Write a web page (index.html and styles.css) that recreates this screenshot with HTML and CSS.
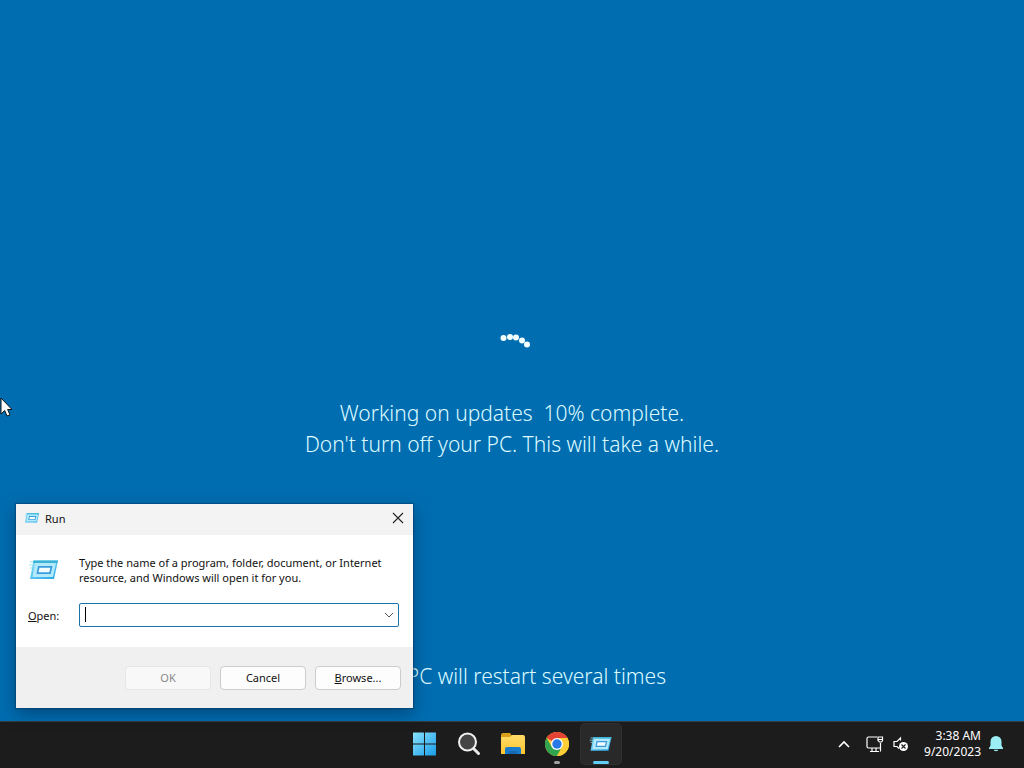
FILE: index.html
```html
<!DOCTYPE html>
<html lang="en">
<head>
  <meta charset="UTF-8" />
  <meta name="viewport" content="width=device-width, initial-scale=1" />
  <title>Working on updates</title>
  <link rel="stylesheet" href="styles.css">
</head>
<body>
  <!-- shared icons -->
  <svg class="defs" aria-hidden="true">
    <defs>
      <linearGradient id="blue" x1="0" y1="0" x2="1" y2="1">
        <stop offset="0" stop-color="#8be3f8" />
        <stop offset="1" stop-color="#24a3e8" />
      </linearGradient>
      <linearGradient id="start" gradientUnits="userSpaceOnUse" x1="0" y1="0" x2="24" y2="24">
        <stop offset="0" stop-color="#8be3fc" />
        <stop offset="1" stop-color="#159ae8" />
      </linearGradient>
      <linearGradient id="folder" x1="0" y1="0" x2="0" y2="1">
        <stop offset="0" stop-color="#ffdc68" />
        <stop offset="1" stop-color="#ffc52e" />
      </linearGradient>
      <symbol id="run-icon" viewBox="0 0 32 24">
        <path d="M2 4h6M1 7h5M2 10h4" stroke="#9be2f3" stroke-width="1" />
        <path d="M5.500 2.500h24.500l-4 18.500H2z" fill="url(#blue)" />
        <path d="M5.500 2.500h24.500l-.6 2.500H5z" fill="#3cb3d5" />
        <path d="M7 5h21l-3 14H4.500z" fill="#b2eafc" />
        <path d="M10 8h14.500l-1.800 8H8.500z" fill="#3a9cdc" />
        <path d="M11.500 9.800h10.800l-1 4.500H10.500z" fill="#f2fcff" />
      </symbol>
    </defs>
  </svg>

  <main class="screen">
    <section class="progress">
      <svg class="spinner" viewBox="0 0 48 48" fill="#f2ffff">
        <circle cx="15.500" cy="4" r="3" />
        <circle cx="22" cy="3" r="3" />
        <circle cx="28" cy="3.500" r="3" />
        <circle cx="34" cy="6.500" r="3" />
        <circle cx="39" cy="10.500" r="3" />
      </svg>
      <p>Working on updates&nbsp; 10% complete.</p>
      <p>Don't turn off your PC. This will take a while.</p>
    </section>
    <p class="restart">Your PC will restart several times</p>
  </main>

  <form class="run" role="dialog" aria-labelledby="run-title">
    <header class="run-title">
      <svg class="small-icon"><use href="#run-icon" /></svg>
      <h1 id="run-title">Run</h1>
      <button type="button" class="close" aria-label="Close">
        <svg viewBox="0 0 12 12"><path d="M1 1l10 10M11 1L1 11" stroke="#222" stroke-width="1.100" /></svg>
      </button>
    </header>
    <div class="run-body">
      <svg class="big-icon"><use href="#run-icon" /></svg>
      <p>Type the name of a program, folder, document, or Internet resource, and Windows will open it for you.</p>
      <label for="open"><u>O</u>pen:</label>
      <div class="combo">
        <input type="text" id="open" autocomplete="off" />
        <span class="caret"></span>
        <button type="button" aria-label="Show history">
          <svg viewBox="0 0 10 6"><path d="M1 1l4 4 4-4" fill="none" stroke="#555" /></svg>
        </button>
      </div>
    </div>
    <footer class="run-buttons">
      <button type="submit" disabled>OK</button>
      <button type="button">Cancel</button>
      <button type="button"><span><u>B</u>rowse...</span></button>
    </footer>
  </form>

  <footer class="taskbar">
    <nav class="apps">
      <button type="button" aria-label="Start">
        <svg viewBox="0 0 24 24" fill="url(#start)">
          <rect x="0" y="0.500" width="11" height="11" rx="0.500" /><rect x="12" y="0.500" width="11" height="11" rx="0.500" />
          <rect x="0" y="12.500" width="11" height="11" rx="0.500" /><rect x="12" y="12.500" width="11" height="11" rx="0.500" />
        </svg>
      </button>
      <button type="button" aria-label="Search">
        <svg viewBox="0 0 24 24">
          <path d="M16.500 16.500l5 5" stroke="#e8e8e8" stroke-width="3" stroke-linecap="round" />
          <circle cx="10.500" cy="10" r="8.500" fill="#454545" stroke="#f0f0f0" stroke-width="2" />
        </svg>
      </button>
      <button type="button" aria-label="File Explorer">
        <svg viewBox="0 0 24 24">
          <path d="M0 3q0-2 2-2h7l2 3v5H0z" fill="#dca018" />
          <path d="M0 5h9l2-2h11q2 0 2 2v17H0z" fill="url(#folder)" />
          <path d="M4 22v-5q0-2 2-2h12q2 0 2 2v5z" fill="#187bcb" />
          <path d="M8 22v-3h8v3z" fill="#1569b5" />
        </svg>
      </button>
      <button type="button" class="open" aria-label="Google Chrome">
        <svg viewBox="0 0 24 24">
          <circle cx="12" cy="12" r="12" fill="#ffcd35" />
          <path d="M12 12L1.600 6A12 12 0 0 1 22.400 6z" fill="#e54335" />
          <path d="M1.600 6A12 12 0 0 0 12 24l5.200-9L12 12 6.800 15z" fill="#31a450" />
          <path d="M12 6h10.400A12 12 0 0 1 12 24l5.200-9z" fill="#ffcd35" />
          <circle cx="12" cy="12" r="6" fill="#fff" />
          <circle cx="12" cy="12" r="4.700" fill="#2878e8" />
        </svg>
      </button>
      <button type="button" class="open active" aria-label="Run">
        <svg viewBox="0 0 24 24"><use href="#run-icon" y="3" width="24" height="18" /></svg>
      </button>
    </nav>
    <div class="tray">
      <button type="button" aria-label="Show hidden icons">
        <svg class="chevron" viewBox="0 0 12 8"><path d="M1 7l5-5 5 5" fill="none" stroke="#fff" stroke-width="1.600" /></svg>
      </button>
      <button type="button" class="system" aria-label="Network and volume">
        <svg viewBox="0 0 18 18" fill="none" stroke="#fff" stroke-width="1.200">
          <path d="M11 2H2.500Q1 2 1 3.500v8Q1 13 2.500 13H14M4 16.500h9M6 13v3.500M10 13v3.500M14.500 8v8.500" />
          <path d="M12 2h4.500v3.500L15.500 7h-2L12 5.500zM12 4.500h4.500" />
        </svg>
        <svg viewBox="0 0 18 18">
          <path d="M8.500 5.500V3L5 6.500H2v5h3l2 2" fill="none" stroke="#fff" stroke-width="1.200" />
          <circle cx="11.500" cy="11.500" r="4.500" fill="#fff" />
          <path d="M9.500 9.500l4 4M13.500 9.500l-4 4" stroke="#222" stroke-width="1.200" />
        </svg>
      </button>
      <button type="button" class="clock">
        <time datetime="2023-09-20T03:38">3:38 AM<br>9/20/2023</time>
        <svg viewBox="0 0 16 16" fill="#9ceef5">
          <path d="M8 0a5.500 5.500 0 0 0-5.500 5.500v4L1 12v1h14v-1l-1.500-2.500v-4A5.500 5.500 0 0 0 8 0z" />
          <path d="M5.500 13.800h5a2.600 2 0 0 1-5 0z" />
        </svg>
      </button>
    </div>
  </footer>

  <svg class="cursor" viewBox="0 0 12 20" aria-hidden="true">
    <path d="M1 1v16l3.700-3.500L7 19l3-1.200-2.400-5.300H12z" fill="#fff" stroke="#111" />
  </svg>
</body>
</html>
```

FILE: styles.css
```css
* { box-sizing: border-box; }

body {
  margin: 0;
  min-height: 100vh;
  display: flex;
  flex-direction: column;
  position: relative;
  overflow: hidden;
  background: #006db0;
  font-family: "Noto Sans", "Open Sans", sans-serif;
  font-size: 11px;
}

p, h1 { margin: 0; font-weight: normal; }
svg { display: block; }
button, input { font: inherit; }
button { padding: 0; border: none; background: none; color: inherit; }
.defs { position: absolute; width: 0; height: 0; }

/* update screen */
.screen {
  flex: 1;
  display: flex;
  flex-direction: column;
  text-align: center;
  color: #dcfaff;
  font-size: 21px;
  line-height: 31px;
}
.screen p { font-weight: 300; }
.progress {
  flex: 1;
  display: flex;
  flex-direction: column;
  justify-content: center;
  align-items: center;
  padding-top: 132px;
}
.spinner { width: 48px; height: 48px; margin-bottom: 16px; }
.restart { padding-bottom: 29px; }

/* Run window */
.run {
  position: absolute;
  left: 16px;
  bottom: 60px;
  width: 397px;
  background: #fff;
  color: #111;
  box-shadow: 0 0 1px 1px rgba(0, 50, 90, 0.4), 0 6px 16px rgba(0, 20, 50, 0.4);
}
.run-title {
  display: flex;
  align-items: center;
  height: 31px;
  padding: 0 0 3px 8px;
  background: #f3f3f3;
}
.run-title h1 { flex: 1; margin-left: 5px; font-size: 11px; }
.small-icon { width: 16px; height: 12px; }
.close { display: grid; place-items: center; width: 30px; height: 28px; }
.close svg { width: 12px; height: 12px; }
.run-body {
  display: grid;
  grid-template-columns: 51px 1fr;
  row-gap: 18px;
  align-items: center;
  padding: 20px 14px 20px 12px;
}
.run-body p { line-height: 15px; }
.big-icon { width: 32px; height: 24px; }
.combo {
  display: flex;
  align-items: center;
  position: relative;
  height: 24px;
  border: 1px solid #1c72ab;
  border-radius: 2px;
}
.combo input {
  flex: 1;
  min-width: 0;
  height: 22px;
  padding: 0 6px;
  border: none;
  outline: none;
  background: none;
}
.caret { position: absolute; left: 5px; top: 3px; width: 1px; height: 15px; background: #000; }
.combo button { width: 18px; }
.combo svg { width: 10px; height: 6px; margin: auto; }
.run-buttons {
  display: flex;
  justify-content: flex-end;
  gap: 9px;
  padding: 19px 12px 18px;
  background: #f0f0f0;
}
.run-buttons button {
  width: 86px;
  height: 24px;
  padding-bottom: 2px;
  border: 1px solid #ccc;
  border-radius: 4px;
  background: #fdfdfd;
}
.run-buttons button:disabled { border-color: #e6e6e6; background: #f8f8f8; color: #888; }

/* taskbar */
.taskbar {
  display: grid;
  grid-template-columns: 1fr auto 1fr;
  height: 47px;
  border-top: 1px solid #343c42;
  background: #1c1c1c;
  color: #fff;
}
.apps { grid-column: 2; display: flex; align-items: center; gap: 4px; padding: 0 0 2px 2px; }
.apps button {
  display: grid;
  place-items: center;
  position: relative;
  width: 40px;
  height: 40px;
  border-radius: 4px;
}
.apps svg { width: 24px; height: 24px; }
.apps .active { background: #292929; box-shadow: 0 0 0 1px #303030; }
.open::after {
  content: "";
  position: absolute;
  left: 17px;
  bottom: 0;
  width: 6px;
  height: 3px;
  border-radius: 2px;
  background: #a0a0a0;
}
.active::after { left: 12px; width: 16px; background: #60cdf5; }

.tray { display: flex; justify-content: flex-end; align-items: center; gap: 16px; padding: 0 20px 2px 0; }
.chevron { width: 12px; height: 8px; }
.system { display: flex; gap: 8px; }
.system svg { width: 18px; height: 18px; }
.clock { display: flex; align-items: center; gap: 7px; text-align: right; font-size: 12px; line-height: 16px; }
.clock svg { width: 16px; height: 16px; }
.system + .clock { margin-left: -2px; }

.cursor { position: absolute; left: 0; top: 397px; width: 12px; height: 20px; }
```
